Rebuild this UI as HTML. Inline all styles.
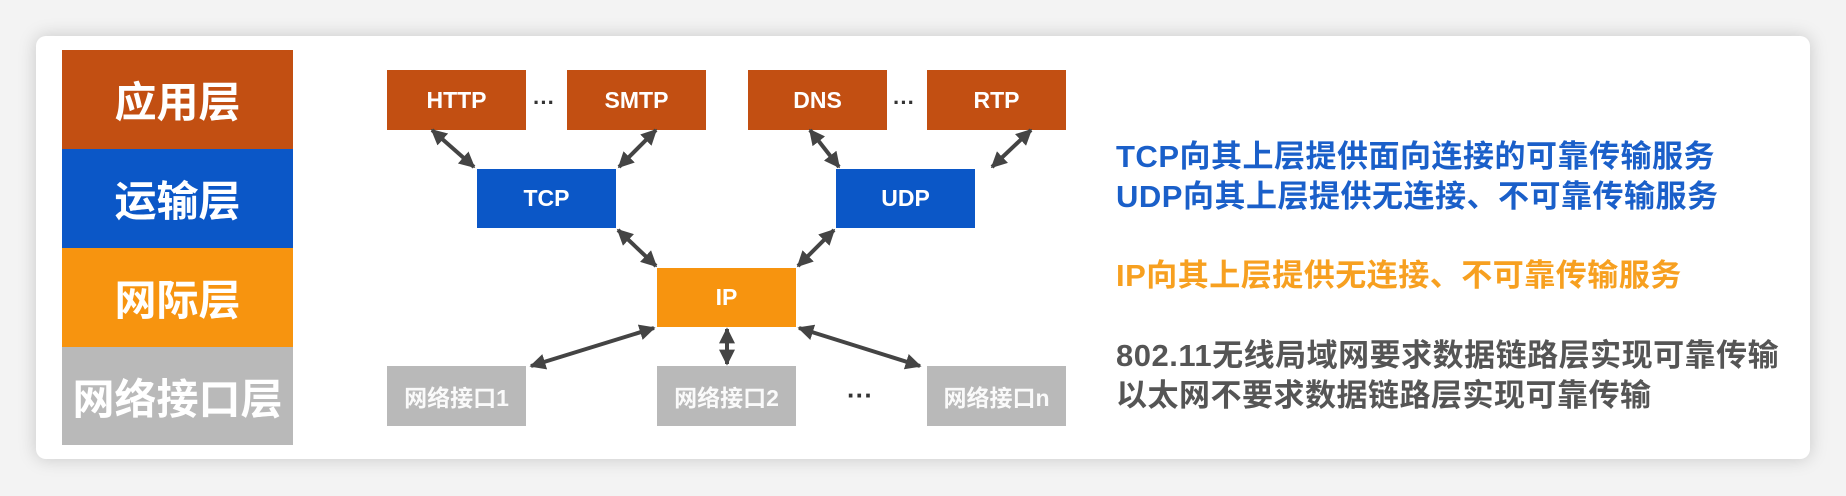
<!DOCTYPE html>
<html><head><meta charset="utf-8"><style>
html,body{margin:0;padding:0;}
body{width:1846px;height:496px;background:#f3f3f3;position:relative;overflow:hidden;font-family:"Liberation Sans","Noto Sans CJK SC",sans-serif;}
.card{position:absolute;left:36px;top:36px;width:1774px;height:423px;background:#fff;border-radius:10px;box-shadow:0 0 18px rgba(0,0,0,0.18);}
.b{position:absolute;color:#fff;font-weight:bold;display:flex;align-items:center;justify-content:center;}
.L{left:62px;width:231px;font-size:42px;}
.box{font-size:23px;}
.br{background:#c24f12;}.bl{background:#0b57c7;}.or{background:#f7940f;}.gr{background:#b9b9b9;}
.g{color:#fafafa;font-size:23px;font-weight:bold;}
.t{position:absolute;left:1116px;font-size:31px;font-weight:bold;white-space:nowrap;line-height:40px;letter-spacing:0.5px;}
.dots{position:absolute;font-weight:bold;color:#333;font-size:22px;}
</style></head><body>
<div class="card"></div>
<div class="b L br" style="top:50px;height:99px">应用层</div>
<div class="b L bl" style="top:149px;height:99px">运输层</div>
<div class="b L or" style="top:248px;height:99px">网际层</div>
<div class="b L gr" style="top:347px;height:98px">网络接口层</div>

<div class="b box br" style="left:387px;top:70px;width:139px;height:60px">HTTP</div>
<div class="b box br" style="left:567px;top:70px;width:139px;height:60px">SMTP</div>
<div class="b box br" style="left:748px;top:70px;width:139px;height:60px">DNS</div>
<div class="b box br" style="left:927px;top:70px;width:139px;height:60px">RTP</div>
<div class="dots" style="left:533px;top:90px">···</div>
<div class="dots" style="left:893px;top:90px">···</div>
<div class="b box bl" style="left:477px;top:169px;width:139px;height:59px">TCP</div>
<div class="b box bl" style="left:836px;top:169px;width:139px;height:59px">UDP</div>
<div class="b box or" style="left:657px;top:268px;width:139px;height:59px">IP</div>
<div class="b box gr g" style="left:387px;top:366px;width:139px;height:60px">网络接口1</div>
<div class="b box gr g" style="left:657px;top:366px;width:139px;height:60px">网络接口2</div>
<div class="b box gr g" style="left:927px;top:366px;width:139px;height:60px">网络接口n</div>
<div class="dots" style="left:847px;top:380px;font-size:26px">···</div>

<svg width="1846" height="496" style="position:absolute;left:0;top:0">
<defs><marker id="a" viewBox="0 0 10 10" refX="9" refY="5" markerWidth="4" markerHeight="4" orient="auto-start-reverse"><path d="M0,0 L10,5 L0,10 z" fill="#444"/></marker></defs>
<g stroke="#444" stroke-width="4" marker-start="url(#a)" marker-end="url(#a)">
<line x1="432" y1="130" x2="474" y2="167"/>
<line x1="656" y1="130" x2="619" y2="167"/>
<line x1="810" y1="130" x2="839" y2="167"/>
<line x1="1031" y1="130" x2="992" y2="167"/>
<line x1="618" y1="230" x2="656" y2="266"/>
<line x1="834" y1="230" x2="798" y2="266"/>
<line x1="654" y1="328" x2="531" y2="366"/>
<line x1="727" y1="329" x2="727" y2="364"/>
<line x1="799" y1="328" x2="920" y2="366"/>
</g></svg>

<div class="t" style="top:137px;color:#1a5fc9">TCP向其上层提供面向连接的可靠传输服务</div>
<div class="t" style="top:177px;color:#1a5fc9">UDP向其上层提供无连接、不可靠传输服务</div>
<div class="t" style="top:256px;color:#f7a020">IP向其上层提供无连接、不可靠传输服务</div>
<div class="t" style="top:336px;color:#555">802.11无线局域网要求数据链路层实现可靠传输</div>
<div class="t" style="top:376px;color:#555">以太网不要求数据链路层实现可靠传输</div>
</body></html>
